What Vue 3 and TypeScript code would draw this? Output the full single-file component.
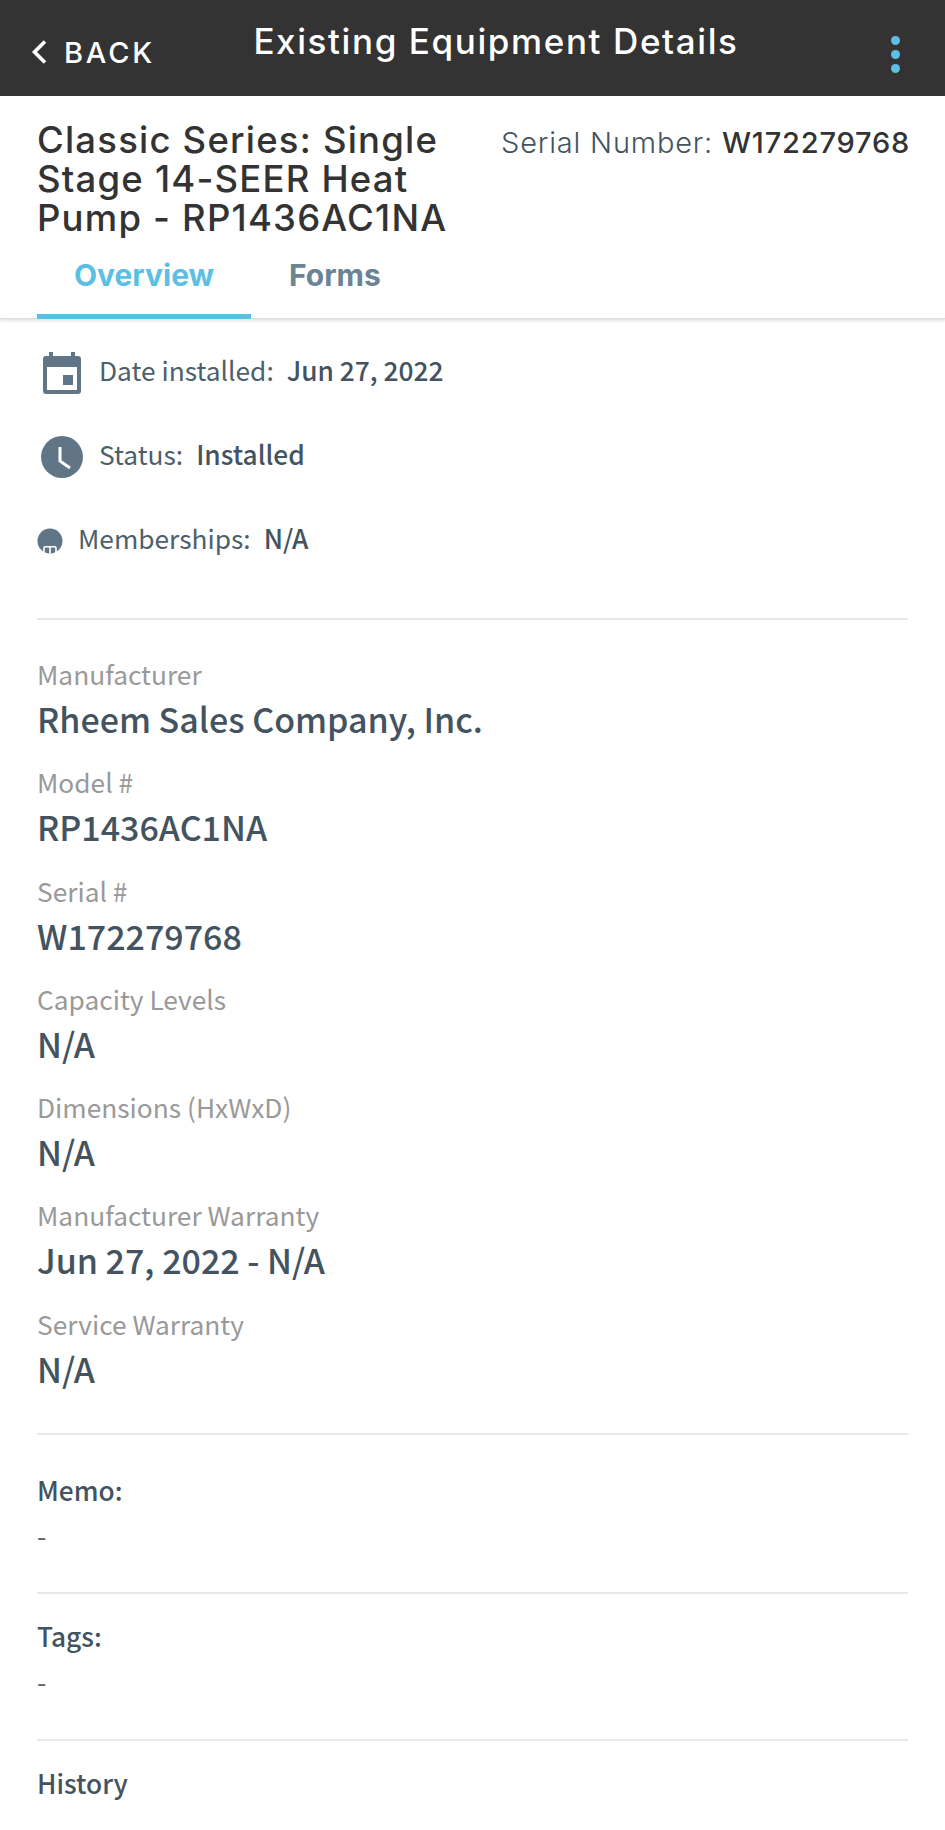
<template>
  <div class="page">
    <header class="topbar">
      <button class="back" type="button">
        <svg width="18" height="26" viewBox="0 0 18 26"><path d="M15 2.5 4.5 13 15 23.5" fill="none" stroke="#fff" stroke-width="3.6" /></svg>
        <span>BACK</span>
      </button>
      <h1 class="page-title">Existing Equipment Details</h1>
      <div class="dots"><i></i><i></i><i></i></div>
    </header>

    <section class="summary">
      <div class="summary-top">
        <h2 class="equip-name">Classic Series: Single Stage 14-SEER Heat Pump - RP1436AC1NA</h2>
        <div class="serial">Serial Number: <b>W172279768</b></div>
      </div>
      <nav class="tabs">
        <a class="tab active">Overview</a>
        <a class="tab">Forms</a>
      </nav>
    </section>

    <main class="content">
      <div class="status-list">
        <div class="status-row">
          <svg class="ico" width="44" height="44" viewBox="0 0 44 44">
            <path fill="#607585" d="M9 2h4v4h18V2h4v4h3a3 3 0 0 1 3 3v32a3 3 0 0 1-3 3H6a3 3 0 0 1-3-3V9a3 3 0 0 1 3-3h3zM7 17v23h30V17z" />
            <rect x="23" y="25" width="10" height="10" fill="#607585" />
          </svg>
          <span>Date installed:</span><b>Jun 27, 2022</b>
        </div>
        <div class="status-row">
          <svg class="ico clock" width="44" height="44" viewBox="0 0 44 44">
            <circle cx="22" cy="22" r="21" fill="#607585" />
            <path d="M20 12v14l10 7" fill="none" stroke="#fff" stroke-width="3" />
          </svg>
          <span>Status:</span><b>Installed</b>
        </div>
        <div class="status-row small-ico">
          <svg width="26" height="26" viewBox="0 0 26 26">
            <circle cx="13" cy="13" r="12.500" fill="#607585" />
            <path d="M7 25.500v-5.500q0-1.200 1.200-1.200h9.600q1.200 0 1.200 1.200v5.500M13 19v6.500" fill="none" stroke="#fff" stroke-width="1.600" />
          </svg>
          <span>Memberships:</span><b>N/A</b>
        </div>
      </div>

      <div class="specs">
        <div v-for="spec in specs" :key="spec.label" class="spec">
          <div class="spec-label">{{ spec.label }}</div>
          <div class="spec-value">{{ spec.value }}</div>
        </div>
      </div>

      <div class="block memo">
        <div class="block-title">Memo:</div>
        <div class="block-text">-</div>
      </div>
      <div class="block tags">
        <div class="block-title">Tags:</div>
        <div class="block-text">-</div>
      </div>
      <div class="block history">
        <div class="block-title">History</div>
      </div>
    </main>
  </div>
</template>

<script setup lang="ts">
const specs = [
  { label: 'Manufacturer', value: 'Rheem Sales Company, Inc.' },
  { label: 'Model #', value: 'RP1436AC1NA' },
  { label: 'Serial #', value: 'W172279768' },
  { label: 'Capacity Levels', value: 'N/A' },
  { label: 'Dimensions (HxWxD)', value: 'N/A' },
  { label: 'Manufacturer Warranty', value: 'Jun 27, 2022 - N/A' },
  { label: 'Service Warranty', value: 'N/A' }
];
</script>

<style>
body {
  background: #fff;
}
</style>

<style scoped>
.page {
  width: 945px;
  height: 1830px;
  overflow: hidden;
  background: #fff;
  font-family: "Noto Sans CJK SC", "Noto Sans", sans-serif;
  color: #43535f;
}

.topbar {
  height: 96px;
  background: #333;
  display: flex;
  align-items: flex-start;
  color: #fff;
  font-family: Inter, "Liberation Sans", sans-serif;
}

.back {
  display: flex;
  align-items: center;
  gap: 16px;
  height: 104px;
  width: 220px;
  padding: 0 0 0 30px;
  border: 0;
  background: none;
  color: #fff;
  font: 500 29px Inter, "Liberation Sans", sans-serif;
  letter-spacing: 2.800px;
}

.page-title {
  margin: 0;
  width: 650px;
  padding-left: 37px;
  font-size: 35px;
  font-weight: 500;
  line-height: 82px;
  letter-spacing: 1.600px;
  white-space: nowrap;
}

.dots {
  margin-left: auto;
  margin-right: 45px;
  padding-top: 36px;
  display: flex;
  flex-direction: column;
  gap: 5px;
}

.dots i {
  display: block;
  width: 9px;
  height: 9px;
  border-radius: 50%;
  background: #5bbfe6;
}

.summary {
  height: 223px;
  box-sizing: border-box;
  padding: 25px 35px 0 37px;
  border-bottom: 1px solid #ddd;
  box-shadow: 0 2px 3px rgba(0, 0, 0, 0.12);
  font-family: Inter, "Liberation Sans", sans-serif;
}

.summary-top {
  display: flex;
  justify-content: space-between;
  align-items: flex-start;
}

.equip-name {
  margin: 0;
  width: 430px;
  font-size: 36.500px;
  font-weight: 500;
  line-height: 39px;
  letter-spacing: 1.200px;
  color: #333;
}

.serial {
  padding-top: 2px;
  font-size: 29px;
  font-weight: 300;
  line-height: 39px;
  letter-spacing: 0.800px;
  color: #43535f;
  white-space: nowrap;
}

.serial b {
  font-weight: 500;
  color: #333;
}

.tabs {
  display: flex;
}

.tab {
  box-sizing: border-box;
  width: 214px;
  height: 81px;
  padding-top: 17px;
  text-align: center;
  font-size: 30px;
  font-weight: 700;
  line-height: 40px;
  color: #6b8494;
}

.tab.active {
  color: #5bbfe6;
  border-bottom: 5px solid #5bbfe6;
}

.tab:last-child {
  width: auto;
  padding-left: 38px;
}

.content {
  padding: 0 37px;
}

.status-list {
  padding-top: 28.500px;
  height: 301px;
  box-sizing: border-box;
  border-bottom: 2px solid #e8e8e8;
}

.status-row {
  display: flex;
  align-items: center;
  height: 44px;
  margin-bottom: 40px;
  font-size: 26.300px;
  color: #4d5f6b;
}

.status-row b {
  margin-left: 13px;
  font-weight: 500;
  color: #43535f;
}

.ico {
  margin-left: 3px;
  margin-right: 15px;
  margin-top: 4px;
}

.ico.clock {
  margin-top: 6px;
}

.small-ico svg {
  margin-right: 15px;
  margin-top: 6px;
}

.specs {
  padding-top: 28px;
  height: 815px;
  box-sizing: border-box;
  border-bottom: 2px solid #e8e8e8;
}

.spec {
  height: 108.300px;
}

.spec-label {
  height: 51px;
  line-height: 52px;
  font-size: 26.300px;
  color: #999;
}

.spec-value {
  height: 40px;
  line-height: 40px;
  font-size: 34px;
  font-weight: 500;
  color: #43535f;
  white-space: nowrap;
}

.block {
  box-sizing: border-box;
  border-bottom: 2px solid #e8e8e8;
}

.block-title {
  line-height: 36px;
  font-size: 26.300px;
  font-weight: 500;
  color: #43535f;
}

.block-text {
  margin-top: 10px;
  line-height: 36px;
  font-size: 27px;
  color: #666;
}

.memo {
  height: 159px;
  padding-top: 37px;
}

.tags {
  height: 147px;
  padding-top: 24px;
}

.history {
  border-bottom: 0;
  padding-top: 24px;
}
</style>
